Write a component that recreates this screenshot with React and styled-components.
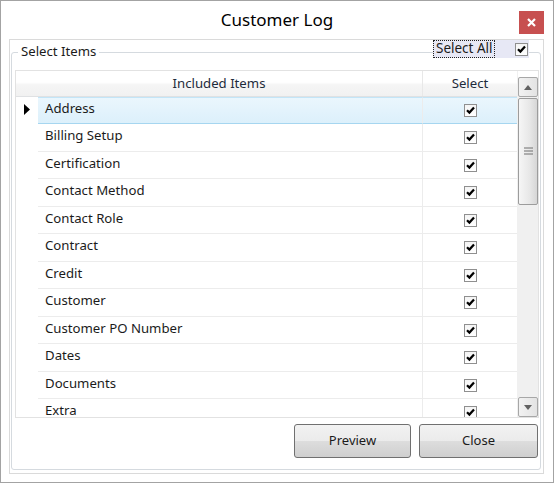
import styled, { createGlobalStyle, css } from 'styled-components'

const GlobalStyle = createGlobalStyle`
	html, body {
		margin: 0;
		padding: 0;
		background: #ffffff;
	}
	body {
		font-family: "Noto Sans", "Open Sans", sans-serif;
		font-size: 13.2px;
		color: #1b1b1b;
	}
	* {
		box-sizing: border-box;
	}
`

const items = [
	'Address',
	'Billing Setup',
	'Certification',
	'Contact Method',
	'Contact Role',
	'Contract',
	'Credit',
	'Customer',
	'Customer PO Number',
	'Dates',
	'Documents',
	'Extra',
]

const Window = styled.div`
	width: 554px;
	height: 483px;
	border: 1px solid #a3a3a3;
	background: #ffffff;
	display: flex;
	flex-direction: column;
`

const TitleBar = styled.div`
	height: 38px;
	display: grid;
	grid-template-columns: 1fr auto 1fr;
	align-items: center;
`

const Title = styled.div`
	grid-column: 2;
	font-size: 17px;
	color: #000000;
	padding-bottom: 1px;
`

const CloseButton = styled.div`
	grid-column: 3;
	justify-self: end;
	margin-right: 9px;
	width: 25px;
	height: 23px;
	margin-top: 4px;
	background: #c75050;
	display: flex;
	align-items: center;
	justify-content: center;
`

const Body = styled.div`
	flex: 1;
	padding: 0 9px 8px 8px;
	display: flex;
`

const Panel = styled.div`
	flex: 1;
	border: 1px solid #dadada;
	padding: 12px 2px 3px 1px;
	display: flex;
`

const GroupBox = styled.div`
	flex: 1;
	position: relative;
	border: 1px solid #d5dadf;
	border-radius: 3px;
	padding: 17px 1px 9px 3px;
	display: flex;
	flex-direction: column;
`

const Legend = styled.span`
	position: absolute;
	top: -10px;
	left: 6px;
	padding: 0 3px;
	background: #ffffff;
	line-height: 17px;
`

const SelectAll = styled.label`
	position: absolute;
	top: -13px;
	left: 421px;
	width: 96px;
	height: 18px;
	background: #e7e8f5;
	display: flex;
	align-items: center;
	justify-content: space-between;
	padding-right: 1px;
`

const SelectAllText = styled.span`
	border: 1px dotted #202020;
	height: 18px;
	line-height: 15px;
	padding: 0 1px 0 2px;
	color: #1b1b1b;
	font-size: 13.5px;
`

const Grid = styled.div`
	height: 348px;
	border: 1px solid #e2e2e2;
	display: flex;
	overflow: hidden;
`

const Table = styled.div`
	flex: 1;
	display: flex;
	flex-direction: column;
	overflow: hidden;
`

const cols = css`
	display: grid;
	grid-template-columns: 22px 384px 1fr;
`

const HeaderRow = styled.div`
	${cols};
	height: 26px;
	flex-shrink: 0;
	background: linear-gradient(#ffffff 0%, #ffffff 45%, #f5f5f5 55%, #f1f1f1 100%);
	border-bottom: 1px solid #dfe1e3;
`

const HeaderCell = styled.div`
	grid-column: ${(props) => props.$span || 'auto'};
	display: flex;
	align-items: center;
	justify-content: center;
	color: #1e2b3b;
	padding-bottom: 1px;
	border-left: ${(props) => (props.$divider ? '1px solid #e8e8e8' : 'none')};
`

const Row = styled.div`
	${cols};
	height: 28px;
	flex-shrink: 0;

	&:nth-child(even) {
		height: 27px;
	}
`

const RowHeader = styled.div`
	display: flex;
	align-items: center;
	justify-content: center;
	padding-bottom: 3px;
`

const Cell = styled.div`
	display: flex;
	align-items: ${(props) => (props.$center ? 'center' : 'flex-start')};
	justify-content: ${(props) => (props.$center ? 'center' : 'flex-start')};
	padding-left: ${(props) => (props.$center ? '0' : '7px')};
	padding-top: ${(props) => (props.$center ? '0' : props.$selected ? '0.5px' : '1.5px')};
	line-height: 18px;
	border-bottom: 1px solid ${(props) => (props.$selected ? '#a6d6f0' : '#ececec')};
	border-top: ${(props) => (props.$selected ? '1px solid #c3e5f7' : 'none')};
	border-left: ${(props) => (props.$center ? '1px solid #ececec' : 'none')};
	background: ${(props) => (props.$selected ? 'linear-gradient(#eaf6fd, #dcf0fb)' : '#ffffff')};
	color: #1b1b1b;
	white-space: nowrap;
`

const Box = styled.span`
	width: 13px;
	height: 13px;
	border: 1px solid #8f8f8f;
	background: linear-gradient(#f4f4f4, #ffffff);
	display: flex;
	align-items: center;
	justify-content: center;
`

const ScrollBar = styled.div`
	width: 21px;
	display: flex;
	flex-direction: column;
	padding-top: 6px;
	background: linear-gradient(#ffffff 0, #ffffff 6px, #f0f0f0 6px);
	border-left: 1px solid #f0f0f0;
`

const ScrollButton = styled.div`
	height: 20px;
	width: 20px;
	border: 1px solid #a7a7a7;
	border-radius: 2px;
	background: linear-gradient(90deg, #f2f2f2, #e3e3e3);
	display: flex;
	align-items: center;
	justify-content: center;
`

const Track = styled.div`
	flex: 1;
	padding: 1px 0;
`

const Thumb = styled.div`
	width: 20px;
	height: 107px;
	border: 1px solid #9c9c9c;
	border-radius: 2px;
	background: linear-gradient(90deg, #f6f6f6, #e7e7e7 60%, #d6d6d6);
	display: flex;
	align-items: center;
	justify-content: center;
`

const Buttons = styled.div`
	display: flex;
	justify-content: flex-end;
	gap: 8px;
	margin-top: 6px;
	padding-right: 1px;
`

const Button = styled.button`
	width: ${(props) => props.$w}px;
	height: 34px;
	border: 1px solid #707070;
	border-radius: 3px;
	background: linear-gradient(#f2f2f2 0%, #ebebeb 50%, #dddddd 51%, #cfcfcf 100%);
	font-family: inherit;
	font-size: 13px;
	color: #1b1b1b;
	padding-bottom: 3px;
`

const Check = () => (
	<Box>
		<svg width="11" height="11" viewBox="0 0 11 11">
			<path d="M2 5.2 L4.4 7.6 L9 2.4" fill="none" stroke="#000" strokeWidth="2.2" />
		</svg>
	</Box>
)

const Arrow = ({ down }) => (
	<svg width="8" height="5" viewBox="0 0 8 5">
		<path d={down ? 'M0 0 H8 L4 5 Z' : 'M0 5 H8 L4 0 Z'} fill="#616161" />
	</svg>
)

const App = () => {
	return (
		<>
			<GlobalStyle />
			<Window>
				<TitleBar>
					<Title>Customer Log</Title>
					<CloseButton>
						<svg width="9" height="9" viewBox="0 0 9 9">
							<path d="M1 1 L8 8 M8 1 L1 8" stroke="#ffffff" strokeWidth="2.2" />
						</svg>
					</CloseButton>
				</TitleBar>
				<Body>
					<Panel>
						<GroupBox>
							<Legend>Select Items</Legend>
							<SelectAll>
								<SelectAllText>Select All</SelectAllText>
								<Check />
							</SelectAll>
							<Grid>
								<Table>
									<HeaderRow>
										<HeaderCell $span="1 / 3">Included Items</HeaderCell>
										<HeaderCell $divider>Select</HeaderCell>
									</HeaderRow>
									{items.map((item, i) => (
										<Row key={item}>
											<RowHeader>
												{i === 0 && (
													<svg width="6" height="11" viewBox="0 0 6 11">
														<path d="M0 0 L6 5.5 L0 11 Z" fill="#000" />
													</svg>
												)}
											</RowHeader>
											<Cell $selected={i === 0}>{item}</Cell>
											<Cell $center $selected={i === 0}>
												<Check />
											</Cell>
										</Row>
									))}
								</Table>
								<ScrollBar>
									<ScrollButton>
										<Arrow />
									</ScrollButton>
									<Track>
										<Thumb>
											<svg width="9" height="9" viewBox="0 0 9 9">
												<path d="M0 1 H9 M0 4 H9 M0 7 H9" stroke="#6e6e6e" strokeWidth="1" />
											</svg>
										</Thumb>
									</Track>
									<ScrollButton>
										<Arrow down />
									</ScrollButton>
								</ScrollBar>
							</Grid>
							<Buttons>
								<Button $w={117}>Preview</Button>
								<Button $w={119}>Close</Button>
							</Buttons>
						</GroupBox>
					</Panel>
				</Body>
			</Window>
		</>
	)
}

export default App
